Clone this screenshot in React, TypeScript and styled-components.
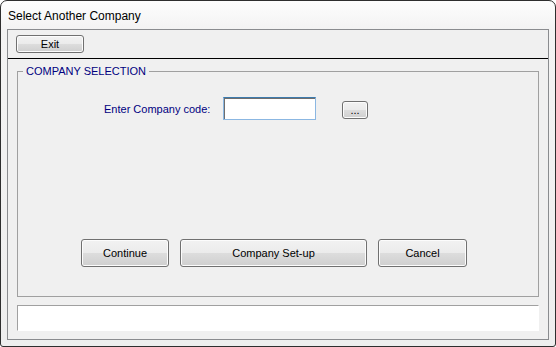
import React from "react";
import styled, { createGlobalStyle } from "styled-components";

const Global = createGlobalStyle`
  html, body { margin: 0; padding: 0; background: #ffffff; }
  body { font-family: "Liberation Sans", Arial, sans-serif; font-size: 11px; }
  * { box-sizing: border-box; }
`;

const Window = styled.div`
  width: 556px;
  height: 347px;
  border: 1px solid #2e2e2e;
  border-radius: 7px 7px 3px 3px;
  background: linear-gradient(180deg, #fdfdfd 0px, #f3f3f3 28px, #eeeeee 100%);
  display: flex;
  flex-direction: column;
  padding: 0 6px 6px 6px;
  overflow: hidden;
`;

const TitleBar = styled.div`
  height: 28px;
  display: flex;
  align-items: center;
  padding-left: 1px;
  padding-top: 1px;
  font-size: 12px;
  color: #000;
  flex: none;
`;

const Client = styled.div`
  flex: 1;
  border: 1px solid #8a8c8f;
  background: #f0f0f0;
  display: flex;
  flex-direction: column;
`;

const Toolbar = styled.div`
  height: 29px;
  border-bottom: 1px solid #000;
  display: flex;
  align-items: flex-start;
  padding: 5px 0 0 8px;
  flex: none;
`;

const Button = styled.button<{ $w: number; $h: number }>`
  width: ${(p) => p.$w}px;
  height: ${(p) => p.$h}px;
  border: 1px solid #707070;
  border-radius: 3px;
  background: linear-gradient(180deg, #f2f2f2 0%, #ebebeb 49%, #dddddd 50%, #cfcfcf 100%);
  box-shadow: inset 0 0 0 1px #fcfcfc;
  font-family: "Liberation Sans", Arial, sans-serif;
  font-size: 11px;
  color: #000;
  padding: 0;
  margin: 0;
  display: flex;
  align-items: center;
  justify-content: center;
  flex: none;
`;

const Body = styled.div`
  flex: 1;
  display: flex;
  flex-direction: column;
  padding: 6px 9px 8px 9px;
  gap: 8px;
`;

const Group = styled.fieldset`
  margin: 0;
  padding: 0;
  border: 1px solid #a0a0a0;
  height: 232px;
  min-width: 0;
`;

const Legend = styled.legend`
  margin-left: 5px;
  padding: 0 3px;
  font-size: 11px;
  line-height: 13px;
  color: #000080;
`;

const GroupInner = styled.div`
  height: 217px;
  display: flex;
  flex-direction: column;
`;

const CodeRow = styled.div`
  display: flex;
  align-items: center;
  padding-left: 86px;
  margin-top: 19px;
  height: 23px;
`;

const Label = styled.span`
  color: #000080;
  font-size: 11px;
  width: 119px;
  flex: none;
`;

const Input = styled.input`
  width: 93px;
  height: 23px;
  border: 1px solid #8bb7e2;
  border-top-color: #3d7bad;
  box-shadow: inset 1px 1px 0 #6e6e6e;
  background: #fff;
  outline: none;
  padding: 0 3px;
  font-family: "Liberation Sans", Arial, sans-serif;
  font-size: 11px;
  flex: none;
`;

const DotsWrap = styled.div`
  margin-left: 26px;
  padding-top: 2px;
`;

const Spacer = styled.div`
  flex: 1;
`;

const ButtonRow = styled.div`
  display: flex;
  gap: 11px;
  padding-left: 63px;
  margin-bottom: 28px;
`;

const Status = styled.div`
  height: 26px;
  background: #fff;
  border-top: 1px solid #a0a0a0;
  border-left: 1px solid #a0a0a0;
  border-right: 1px solid #fff;
  border-bottom: 1px solid #fff;
  flex: none;
`;

export default function App() {
  return (
    <>
      <Global />
      <Window>
        <TitleBar>Select Another Company</TitleBar>
        <Client>
          <Toolbar>
            <Button $w={68} $h={18}>Exit</Button>
          </Toolbar>
          <Body>
            <Group>
              <Legend>COMPANY SELECTION</Legend>
              <GroupInner>
                <CodeRow>
                  <Label>Enter Company code:</Label>
                  <Input defaultValue="" />
                  <DotsWrap>
                    <Button $w={26} $h={18}>...</Button>
                  </DotsWrap>
                </CodeRow>
                <Spacer />
                <ButtonRow>
                  <Button $w={88} $h={28}>Continue</Button>
                  <Button $w={187} $h={28}>Company Set-up</Button>
                  <Button $w={89} $h={28}>Cancel</Button>
                </ButtonRow>
              </GroupInner>
            </Group>
            <Status />
          </Body>
        </Client>
      </Window>
    </>
  );
}
